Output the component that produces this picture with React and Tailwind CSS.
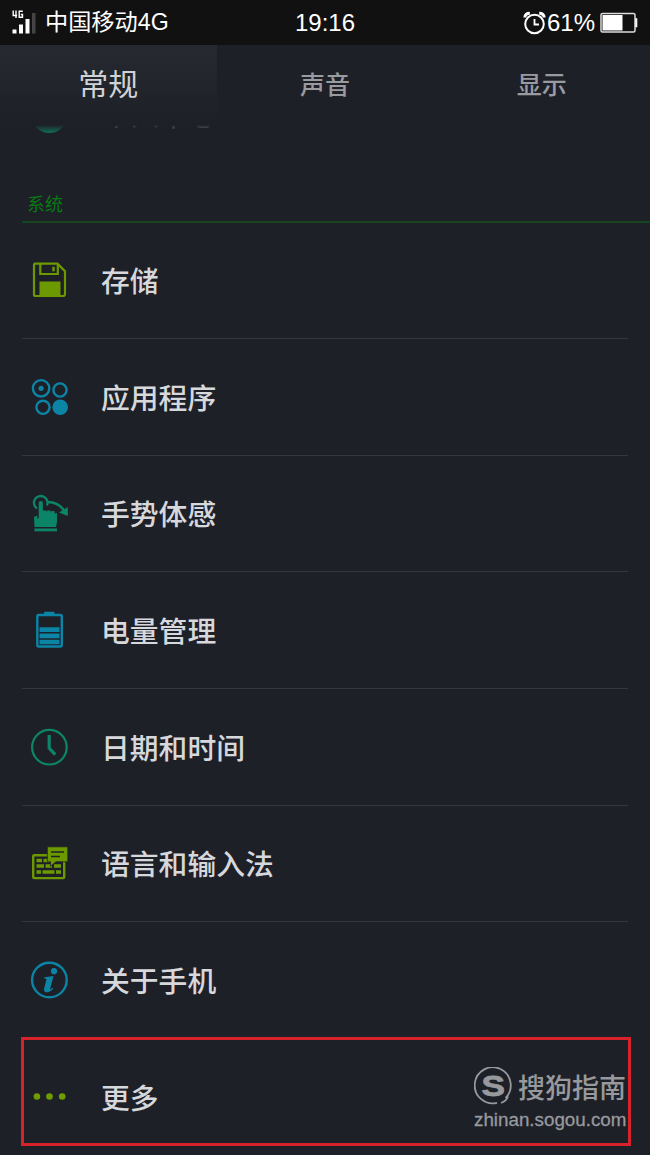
import React, { useState } from 'react'

const SignalIcon = () => (
    <svg width="26" height="26" viewBox="0 0 26 26" fill="none">
        <path d="M2.200 .5v5h4M5 .5v7.500M11.800 1.300H8.200v6h3.300V4.500H9.800" stroke="#fff" strokeWidth="1.4" />
        <rect x="1.5" y="19.5" width="4" height="4" fill="#fff" />
        <rect x="8" y="14.5" width="4" height="9" fill="#fff" />
        <rect x="14.500" y="9" width="4" height="14.5" fill="#fff" />
        <rect x="21" y="3" width="3.5" height="20.5" fill="#444" />
    </svg>
)

const AlarmIcon = () => (
    <svg width="24" height="24" viewBox="0 0 24 24" fill="none" stroke="#fff" strokeWidth="2">
        <circle cx="11.500" cy="13" r="9.300" />
        <path d="M11.500 8V13.500h4.500" strokeWidth="1.8" />
        <path d="M1.800 6.500C2 4 4 2.300 6.800 2.300M21.200 6.500C21 4 19 2.300 16.200 2.300" strokeWidth="3" />
    </svg>
)

const BatteryLevel = () => (
    <svg width="38" height="22" viewBox="0 0 38 22" fill="none">
        <rect x="1" y="1.5" width="34" height="18.500" rx="1.5" stroke="#ddd" strokeWidth="1.5" />
        <rect x="2.5" y="3" width="20" height="15.500" fill="#fff" />
        <path d="M35.700 6.5h1.2v8.500h-1.2z" fill="#fff" stroke="#fff" strokeWidth=".8" />
    </svg>
)

const StorageIcon = () => (
    <g fill="none" stroke="#6c9900" strokeWidth="2.2">
        <path d="M5 3.700h22.500l7.500 7.500V34a2 2 0 0 1-2 2H5.500a1.500 1.500 0 0 1-1.500-1.500V4.700a1 1 0 0 1 1-1z" />
        <path d="M10.300 3.700v10.300h17.500V3.700" />
        <path d="M23.500 6.800v4.500" strokeWidth="2.500" />
        <path d="M9.500 21.500h21v15h-21z" fill="#6c9900" stroke="none" />
    </g>
)

const AppsIcon = () => (
    <g fill="none" stroke="#0b84a5" strokeWidth="2.4">
        <circle cx="11.100" cy="11.300" r="8.200" />
        <circle cx="11.100" cy="11.300" r="2.600" fill="#0b84a5" stroke="none" />
        <circle cx="30" cy="13" r="6.600" />
        <circle cx="13" cy="30.300" r="6.600" />
        <circle cx="30.200" cy="30.200" r="7.800" fill="#0b84a5" stroke="none" />
    </g>
)

const GestureIcon = () => (
    <g fill="#0c8467">
        <path d="M7 14.500A6.800 6.800 0 1 1 17 11.500" fill="none" stroke="#0c8467" strokeWidth="2.300" />
        <path d="M17.500 8C24 8 30 10.500 34 16.500" fill="none" stroke="#0c8467" strokeWidth="2.500" />
        <path d="M37.800 13v9l-8.800-3.500z" />
        <path d="M8.700 9a2.100 2.100 0 0 1 4.200 0v7.500h3.300v1.500l1-1.500h3.300v2l1-1.500h2.800l.5 2.500 2.200-.5V28l-1 5H4.500L4 23l3-1.500.5 3.500 1.200-1z" />
        <path d="M4.500 34.500h22.500v2.800H4.500z" />
    </g>
)

const PowerIcon = () => (
    <g fill="#0b84a5">
        <rect x="7.300" y="5" width="24.500" height="31.500" rx="1.500" fill="none" stroke="#0b84a5" strokeWidth="2.400" />
        <rect x="14" y="1.800" width="10.500" height="3" rx="1" />
        <path d="M9.500 17.300h20v4.700h-20zM9.500 23.600h20v4.700h-20zM9.500 29.800h20v4.400h-20z" />
    </g>
)

const ClockIcon = () => (
    <g fill="none" stroke="#0c8467">
        <circle cx="19.400" cy="20.200" r="17.300" strokeWidth="2.200" />
        <path d="M19.200 8v13.200l6 6.500" strokeWidth="3.200" />
    </g>
)

const KeyboardIcon = () => (
    <g>
        <rect x="3.200" y="11.300" width="31" height="22.800" rx="1" fill="none" stroke="#6c9900" strokeWidth="2.400" />
        <path d="M6.500 16.500h5.500M13.500 16.500h7M6.500 22h7.500M15.500 22h6.500M24 22h7M6.500 28h4.500M12.500 28h12M26 28h5" stroke="#6c9900" strokeWidth="3.300" />
        <path d="M17.300 2.800h20.500v15H26l-5.500 4.500v-4.500h-3.200z" fill="#6c9900" stroke="#1e2028" strokeWidth=".8" />
        <path d="M21 8h13M21 12.500h9" stroke="#1e2028" strokeWidth="1.500" />
    </g>
)

const AboutIcon = () => (
    <g>
        <circle cx="19.400" cy="20" r="17.300" fill="none" stroke="#0b84a5" strokeWidth="2.400" />
        <circle cx="24" cy="11.200" r="3.100" fill="#0b84a5" />
        <path d="M14.500 17.200l9-1.200-3.500 13.200q1.200 0 2.500-1.500l.8.800Q20 32.500 16.800 32.300q-3.500-.3-2.700-3.800l2.500-9.500-2.400-.5z" fill="#0b84a5" />
    </g>
)

const MoreIcon = () => (
    <g fill="#6f9d00">
        <circle cx="6.900" cy="19.500" r="3.300" />
        <circle cx="19.500" cy="19.500" r="3.300" />
        <circle cx="32.200" cy="19.500" r="3.300" />
    </g>
)

const tabs = ['常规', '声音', '显示']

const items = [
    { name: '存储', icon: StorageIcon },
    { name: '应用程序', icon: AppsIcon },
    { name: '手势体感', icon: GestureIcon },
    { name: '电量管理', icon: PowerIcon },
    { name: '日期和时间', icon: ClockIcon },
    { name: '语言和输入法', icon: KeyboardIcon },
    { name: '关于手机', icon: AboutIcon },
    { name: '更多', icon: MoreIcon },
]

const StatusBar = () => {
    return <div className="h-[45px] shrink-0 bg-[#111111] grid grid-cols-3 items-center text-white text-[24px] leading-none">
        <div className="flex items-center pl-[11px] gap-[8px]">
            <SignalIcon />
            <span className="text-[23.2px]">中国移动4G</span>
        </div>
        <div className="text-center pt-[1px]">19:16</div>
        <div className="flex items-center justify-end pr-[12px]">
            <AlarmIcon />
            <span className="mr-[5px] pt-[1px]">61%</span>
            <BatteryLevel />
        </div>
    </div>
}

const Watermark = () => {
    return <div className="absolute left-[474px] top-[28px] text-[#97999d]">
        <div className="flex items-center gap-[5px]">
            <svg width="39" height="40" viewBox="0 0 39 40">
                <path d="M31.500 31A18 18 0 1 0 23 35.800M34 29.500q-1.500 4.500-7 6.500" fill="none" stroke="#97999d" strokeWidth="1.800" />
                <text x="7.500" y="28.500" textLength="23.500" lengthAdjust="spacingAndGlyphs" fill="#97999d" stroke="#97999d" strokeWidth=".8" fontSize="29" fontWeight="700">S</text>
            </svg>
            <span className="pt-[4px] text-[27px] leading-none font-medium whitespace-nowrap">搜狗指南</span>
        </div>
        <div className="mt-[4px] text-[18.8px] leading-none [-webkit-text-stroke:0.3px_#97999d]">zhinan.sogou.com</div>
    </div>
}

const Row = ({ item, last }) => {
    const Icon = item.icon
    return <div className="relative h-[116.67px] px-[22px]">
        <div className={last ? 'h-full flex items-center pb-[1px]' : 'h-full flex items-center border-b border-[#35373b]'}>
            <svg className="ml-[8px] shrink-0" width="40" height="40" viewBox="0 0 40 40"><Icon /></svg>
            <span className="ml-[31px] pt-[4px] text-[28.8px] leading-none font-medium text-[#d6d8dc]">{item.name}</span>
        </div>
        {last ? <div className="absolute left-[21px] top-[-2px] w-[610px] h-[109px] border-3 border-[#d7222c]"></div> : null}
        {last ? <Watermark /> : null}
    </div>
}

const App = () => {
    const [active, setActive] = useState(0)

    return <div className="w-[650px] h-[1155px] overflow-hidden flex flex-col bg-[#1e2028] font-['Liberation_Sans','Noto_Sans_CJK_SC',sans-serif]">
        <StatusBar />
        <div className="h-[80px] shrink-0 grid grid-cols-3">
            {tabs.map((tab, key) => {
                return <button key={key} onClick={() => setActive(key)} className={active === key
                    ? 'flex items-center justify-center text-[30px] leading-none text-[#d0d2d6] bg-linear-to-b from-[#26292f] to-[#1e2028]'
                    : 'flex items-center justify-center text-[25px] leading-none font-medium text-[#999ba0]'}>
                    {tab}
                </button>
            })}
        </div>
        {/* row scrolled under the tabs, fades out at its top */}
        <div className="h-[10px] shrink-0 overflow-hidden flex items-end pl-[31px] mask-[linear-gradient(to_bottom,transparent,black_80%)]">
            <svg className="shrink-0" width="37" height="37" viewBox="0 0 37 37"><circle cx="18.500" cy="17" r="18" fill="#12705a" /></svg>
            <span className="ml-[34px] pb-[4px] text-[28.7px] leading-none font-medium text-[#808388]">个人中心</span>
        </div>
        <div className="h-[87.5px] shrink-0 ml-[22px] pl-[5px] pb-[7px] flex items-end border-b-2 border-[#17451f]">
            <span className="text-[18px] leading-none text-[#087a12]">系统</span>
        </div>
        <div className="shrink-0">
            {items.map((item, key) => {
                return <Row key={key} item={item} last={key === items.length - 1} />
            })}
        </div>
    </div>
}
export default App
